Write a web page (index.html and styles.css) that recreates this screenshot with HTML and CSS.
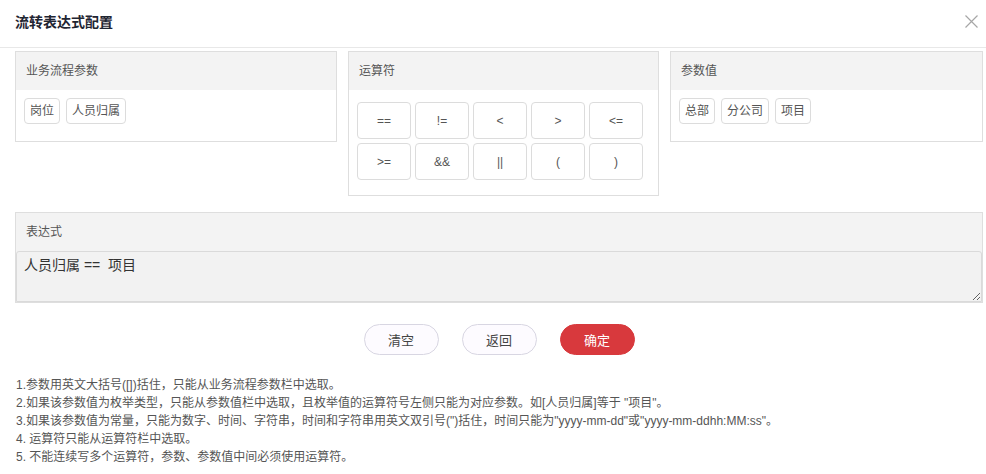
FILE: index.html
```html
<!DOCTYPE html>
<html lang="zh-CN">
<head>
<meta charset="utf-8">
<title>流转表达式配置</title>
<link rel="stylesheet" href="styles.css">
</head>
<body>
<div class="dialog">
  <div class="dlg-header">
    <span class="dlg-title">流转表达式配置</span>
    <span class="dlg-close">
      <svg width="13" height="13" viewBox="0 0 13 13"><path d="M0.5 0.5 L12.5 12.5 M12.5 0.5 L0.5 12.5" stroke="#a6a6a6" stroke-width="1.2" fill="none"/></svg>
    </span>
  </div>
  <div class="dlg-body">
    <div class="panels">
      <div class="panel">
        <div class="panel-head">业务流程参数</div>
        <div class="panel-tags">
          <span class="tag">岗位</span>
          <span class="tag">人员归属</span>
        </div>
      </div>
      <div class="panel">
        <div class="panel-head">运算符</div>
        <div class="ops">
          <span class="op">==</span>
          <span class="op">!=</span>
          <span class="op">&lt;</span>
          <span class="op">&gt;</span>
          <span class="op">&lt;=</span>
          <span class="op">&gt;=</span>
          <span class="op">&amp;&amp;</span>
          <span class="op">||</span>
          <span class="op">(</span>
          <span class="op">)</span>
        </div>
      </div>
      <div class="panel">
        <div class="panel-head">参数值</div>
        <div class="panel-tags">
          <span class="tag">总部</span>
          <span class="tag">分公司</span>
          <span class="tag">项目</span>
        </div>
      </div>
    </div>
    <div class="expr">
      <div class="panel-head">表达式</div>
      <textarea class="expr-input">人员归属 ==  项目</textarea>
    </div>
    <div class="actions">
      <button class="btn">清空</button>
      <button class="btn">返回</button>
      <button class="btn btn-primary">确定</button>
    </div>
    <div class="notes">
      <p>1.参数用英文大括号([])括住，只能从业务流程参数栏中选取。</p>
      <p>2.如果该参数值为枚举类型，只能从参数值栏中选取，且枚举值的运算符号左侧只能为对应参数。如[人员归属]等于 "项目"。</p>
      <p>3.如果该参数值为常量，只能为数字、时间、字符串，时间和字符串用英文双引号(")括住，时间只能为"yyyy-mm-dd"或"yyyy-mm-ddhh:MM:ss"。</p>
      <p>4. 运算符只能从运算符栏中选取。</p>
      <p>5. 不能连续写多个运算符，参数、参数值中间必须使用运算符。</p>
    </div>
  </div>
</div>
</body>
</html>
```
FILE: styles.css
```css
html, body {
  margin: 0;
  padding: 0;
  background: #fff;
}
body {
  font-family: "Liberation Sans", "Noto Sans CJK SC", sans-serif;
  color: #333;
  font-size: 12px;
}
.dialog {
  width: 986px;
}
.dlg-header {
  height: 48px;
  border-bottom: 1px solid #e8e8e8;
  box-sizing: border-box;
  display: flex;
  align-items: center;
  justify-content: space-between;
  padding: 0 8px 0 15px;
}
.dlg-title {
  font-size: 14px;
  font-weight: bold;
  color: #1f2532;
  margin-top: -6px;
}
.dlg-close {
  display: flex;
  margin-top: -5px;
}
.dlg-body {
  padding: 3px 3px 0 15px;
}
.panels {
  display: grid;
  grid-template-columns: 322px 311px 313px;
  column-gap: 11px;
  align-items: start;
}
.panel {
  border: 1px solid #dedede;
  background: #fff;
}
.panel-head {
  height: 38px;
  line-height: 38px;
  background: #f3f3f3;
  padding-left: 10px;
  font-size: 12px;
  color: #555;
}
.panel-tags {
  display: flex;
  gap: 6px;
  padding: 8px 8px 17px;
}
.tag {
  display: inline-block;
  height: 26px;
  line-height: 24px;
  box-sizing: border-box;
  padding: 0 5px;
  border: 1px solid #dcdcdc;
  border-radius: 4px;
  color: #555;
  font-size: 12px;
}
.ops {
  display: grid;
  grid-template-columns: repeat(5, 54px);
  grid-auto-rows: 37px;
  gap: 4px;
  padding: 12px 8px 15px;
}
.op {
  border: 1px solid #dcdcdc;
  border-radius: 4px;
  display: flex;
  align-items: center;
  justify-content: center;
  color: #555;
  font-size: 12px;
}
.expr {
  margin-top: 16px;
  border: 1px solid #dedede;
  background: #f3f3f3;
  display: flex;
  flex-direction: column;
}
.expr-input {
  display: block;
  height: 51px;
  box-sizing: border-box;
  margin: 0;
  border: 1px solid #dadada;
  border-radius: 3px 3px 0 0;
  background: #f2f2f2;
  font-family: "Liberation Sans", "Noto Sans CJK SC", sans-serif;
  font-size: 14px;
  color: #333;
  padding: 2px 7px;
  resize: vertical;
  outline: none;
}
.actions {
  display: flex;
  justify-content: center;
  gap: 23px;
  margin-top: 21px;
}
.btn {
  width: 75px;
  height: 31px;
  border-radius: 16px;
  border: 1px solid #d8d6e2;
  background: #fdfbff;
  color: #444;
  font-family: "Liberation Sans", "Noto Sans CJK SC", sans-serif;
  font-size: 13px;
  padding: 0;
}
.btn-primary {
  background: #d8393d;
  border-color: #d8393d;
  color: #fff;
}
.notes {
  margin-top: 21px;
  padding-left: 1px;
  color: #555;
  font-size: 12px;
  line-height: 18px;
}
.notes p {
  margin: 0;
}
```
